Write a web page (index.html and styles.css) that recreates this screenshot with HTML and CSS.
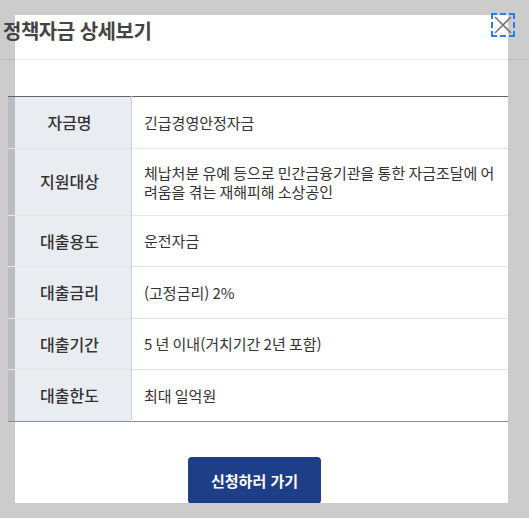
FILE: index.html
```html
<!DOCTYPE html>
<html lang="ko">
<head>
    <meta charset="UTF-8">
    <meta name="viewport" content="width=device-width, initial-scale=1.0">
    <title>정책자금 상세보기</title>
    <link rel="stylesheet" href="styles.css">
</head>
<body>
    <div class="modal">
        <div class="modal-head">
            <h2 class="modal-title">정책자금 상세보기</h2>
        </div>
        <button class="close-btn" aria-label="닫기">
            <svg width="18" height="18" viewBox="0 0 18 18">
                <path d="M1 1 L17 17 M17 1 L1 17" stroke="#777" stroke-width="1.6" fill="none"/>
            </svg>
        </button>
        <div class="modal-body">
            <table class="fund-table">
                <tr>
                    <th>자금명</th>
                    <td>긴급경영안정자금</td>
                </tr>
                <tr>
                    <th>지원대상</th>
                    <td>체납처분 유예 등으로 민간금융기관을 통한 자금조달에 어려움을 겪는 재해피해 소상공인</td>
                </tr>
                <tr>
                    <th>대출용도</th>
                    <td>운전자금</td>
                </tr>
                <tr>
                    <th>대출금리</th>
                    <td>(고정금리) 2%</td>
                </tr>
                <tr>
                    <th>대출기간</th>
                    <td>5 년 이내(거치기간 2년 포함)</td>
                </tr>
                <tr>
                    <th>대출한도</th>
                    <td>최대 일억원</td>
                </tr>
            </table>
            <div class="modal-foot">
                <button class="apply-btn">신청하러 가기</button>
            </div>
        </div>
    </div>
</body>
</html>
```

FILE: styles.css
```css
body {
    margin: 0;
    padding: 15px 0 0;
    background: #cccccc;
    font-family: "Noto Sans CJK KR", "Noto Sans", sans-serif;
    color: #333;
    overflow: hidden;
}
.modal {
    position: relative;
    width: 493px;
    height: 488px;
    margin-left: 15px;
    background: #fff;
}
.modal-head {
    margin: 0 -21px 0 -15px;
    padding: 2px 0 0 3px;
    height: 42px;
    border-bottom: 1px solid rgba(0, 0, 0, 0.08);
}
.modal-title {
    margin: 0;
    font-size: 20px;
    line-height: 28px;
    font-weight: 700;
    color: #444;
    letter-spacing: -0.5px;
}
.close-btn {
    position: absolute;
    top: -2px;
    right: -7px;
    width: 24px;
    height: 24px;
    padding: 0;
    border: 2px dashed #2b7de6;
    background: transparent;
    display: flex;
    align-items: center;
    justify-content: center;
    cursor: pointer;
}
.modal-body {
    padding-top: 36px;
}
.fund-table {
    margin-left: -7px;
    width: 500px;
    border-collapse: collapse;
    border-bottom: 1px solid #8c8c86;
}
.fund-table th,
.fund-table td {
    border-top: 1px solid #e4e4e4;
    padding: 14px 10px 14px 12px;
    vertical-align: middle;
}
.fund-table tr:first-child th,
.fund-table tr:first-child td {
    border-top: 1px solid #5c6470;
}
.fund-table th {
    width: 123px;
    padding: 14px 0;
    border-right: 1px solid #d2d2d2;
    background: linear-gradient(90deg, #b9bcc1 7px, #e9edf2 7px);
    font-size: 16px;
    font-weight: 500;
    line-height: 22.5px;
    text-align: center;
    color: #333;
}
.fund-table td {
    font-size: 15px;
    line-height: 19px;
    word-spacing: -1px;
    color: #333;
}
.modal-foot {
    padding: 35px 14px 0 0;
    text-align: center;
}
.apply-btn {
    width: 133px;
    height: 47px;
    border: none;
    border-radius: 4px;
    background: #1e3f87;
    color: #fff;
    font-family: inherit;
    font-size: 15px;
    font-weight: 700;
    cursor: pointer;
}
```
